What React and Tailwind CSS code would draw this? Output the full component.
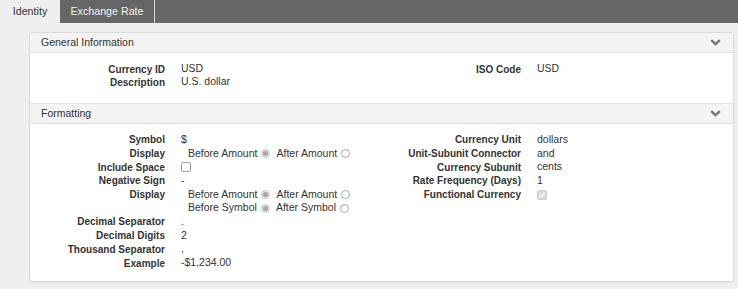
import React from "react";

function Chevron() {
  return (
    <svg width="11" height="7" viewBox="0 0 11 7" className="block">
      <path d="M1.2 1.2 L5.5 5.2 L9.8 1.2" fill="none" stroke="#777" strokeWidth="2.4" strokeLinecap="butt" strokeLinejoin="miter" />
    </svg>
  );
}

function Radio({ checked }) {
  if (checked) {
    return (
      <span className="inline-flex w-[9px] h-[9px] rounded-full border border-[#c4c4c4] bg-[#e9e9e9] items-center justify-center">
        <span className="w-[5px] h-[5px] rounded-full bg-[#a6a6a6]" />
      </span>
    );
  }
  return <span className="inline-block w-[9px] h-[9px] rounded-full border border-[#a8a8a8] bg-white" />;
}

function Header({ title }) {
  return (
    <div className="h-[20px] bg-[#f4f4f4] border-b border-[#e1e1e1] flex items-center justify-between pl-[11px] pr-[12px]">
      <span className="text-[10.5px] text-[#333]">{title}</span>
      <Chevron />
    </div>
  );
}

function Row({ label, children, lw = "w-[135px]", h = "h-[13.7px]" }) {
  return (
    <div className={`flex items-center ${h}`}>
      <div className={`${lw} shrink-0 text-right font-bold text-[10px] text-[#333] whitespace-nowrap`}>{label}</div>
      <div className="ml-[16px] text-[10.5px] text-[#333] flex items-center whitespace-nowrap">{children}</div>
    </div>
  );
}

function RadioPair({ a, b }) {
  return (
    <div className="flex items-center pl-[7px]">
      <span>{a}</span>
      <span className="ml-[4px] flex"><Radio checked /></span>
      <span className="ml-[6px]">{b}</span>
      <span className="ml-[4px] flex"><Radio /></span>
    </div>
  );
}

export default function App() {
  return (
    <div className="w-[738px] h-[289px] bg-[#efefef] font-['Liberation_Sans',Arial,sans-serif] text-[#333] overflow-hidden">
      <div className="flex h-[23px] bg-[#666666]">
        <div className="w-[60px] bg-[#efefef] text-[#333] text-[10.7px] flex items-center justify-center">Identity</div>
        <div className="w-[95px] border-r border-[#d8d8d8] text-[#f4f4f4] text-[10.7px] flex items-center justify-center">Exchange Rate</div>
      </div>
      <div className="pl-[29px] pr-[4px] pt-[9px]">
        <div className="bg-white border border-[#dadada] rounded-[3px] overflow-hidden shadow-[0_1px_1px_rgba(0,0,0,0.05)]">
          <Header title="General Information" />
          <div className="h-[50px] pt-[10px] flex">
            <div className="w-[352px]">
              <Row label="Currency ID" h="h-[12.7px]">USD</Row>
              <Row label="Description" h="h-[12.7px]">U.S. dollar</Row>
            </div>
            <div>
              <Row label="ISO Code" lw="w-[139px]" h="h-[12.7px]">USD</Row>
            </div>
          </div>
          <div className="border-t border-[#e6e6e6]">
            <Header title="Formatting" />
          </div>
          <div className="h-[157px] pt-[9px] flex">
            <div className="w-[352px]">
              <Row label="Symbol">$</Row>
              <Row label="Display"><RadioPair a="Before Amount" b="After Amount" /></Row>
              <Row label="Include Space">
                <span className="inline-block w-[10px] h-[10px] rounded-[2px] border border-[#a0a0a0] bg-white" />
              </Row>
              <Row label="Negative Sign">-</Row>
              <Row label="Display"><RadioPair a="Before Amount" b="After Amount" /></Row>
              <Row label=""><RadioPair a="Before Symbol" b="After Symbol" /></Row>
              <Row label="Decimal Separator">.</Row>
              <Row label="Decimal Digits">2</Row>
              <Row label="Thousand Separator">,</Row>
              <Row label="Example">-$1,234.00</Row>
            </div>
            <div>
              <Row label="Currency Unit" lw="w-[139px]">dollars</Row>
              <Row label="Unit-Subunit Connector" lw="w-[139px]">and</Row>
              <Row label="Currency Subunit" lw="w-[139px]">cents</Row>
              <Row label="Rate Frequency (Days)" lw="w-[139px]">1</Row>
              <Row label="Functional Currency" lw="w-[139px]">
                <span className="inline-flex w-[10px] h-[10px] rounded-[2px] border border-[#cfcfcf] bg-[#dcdcdc] items-center justify-center">
                  <svg width="8" height="8" viewBox="0 0 8 8">
                    <path d="M1.3 4.2 L3.2 6 L6.8 1.8" fill="none" stroke="#f5f5f5" strokeWidth="1.4" />
                  </svg>
                </span>
              </Row>
            </div>
          </div>
        </div>
      </div>
    </div>
  );
}
